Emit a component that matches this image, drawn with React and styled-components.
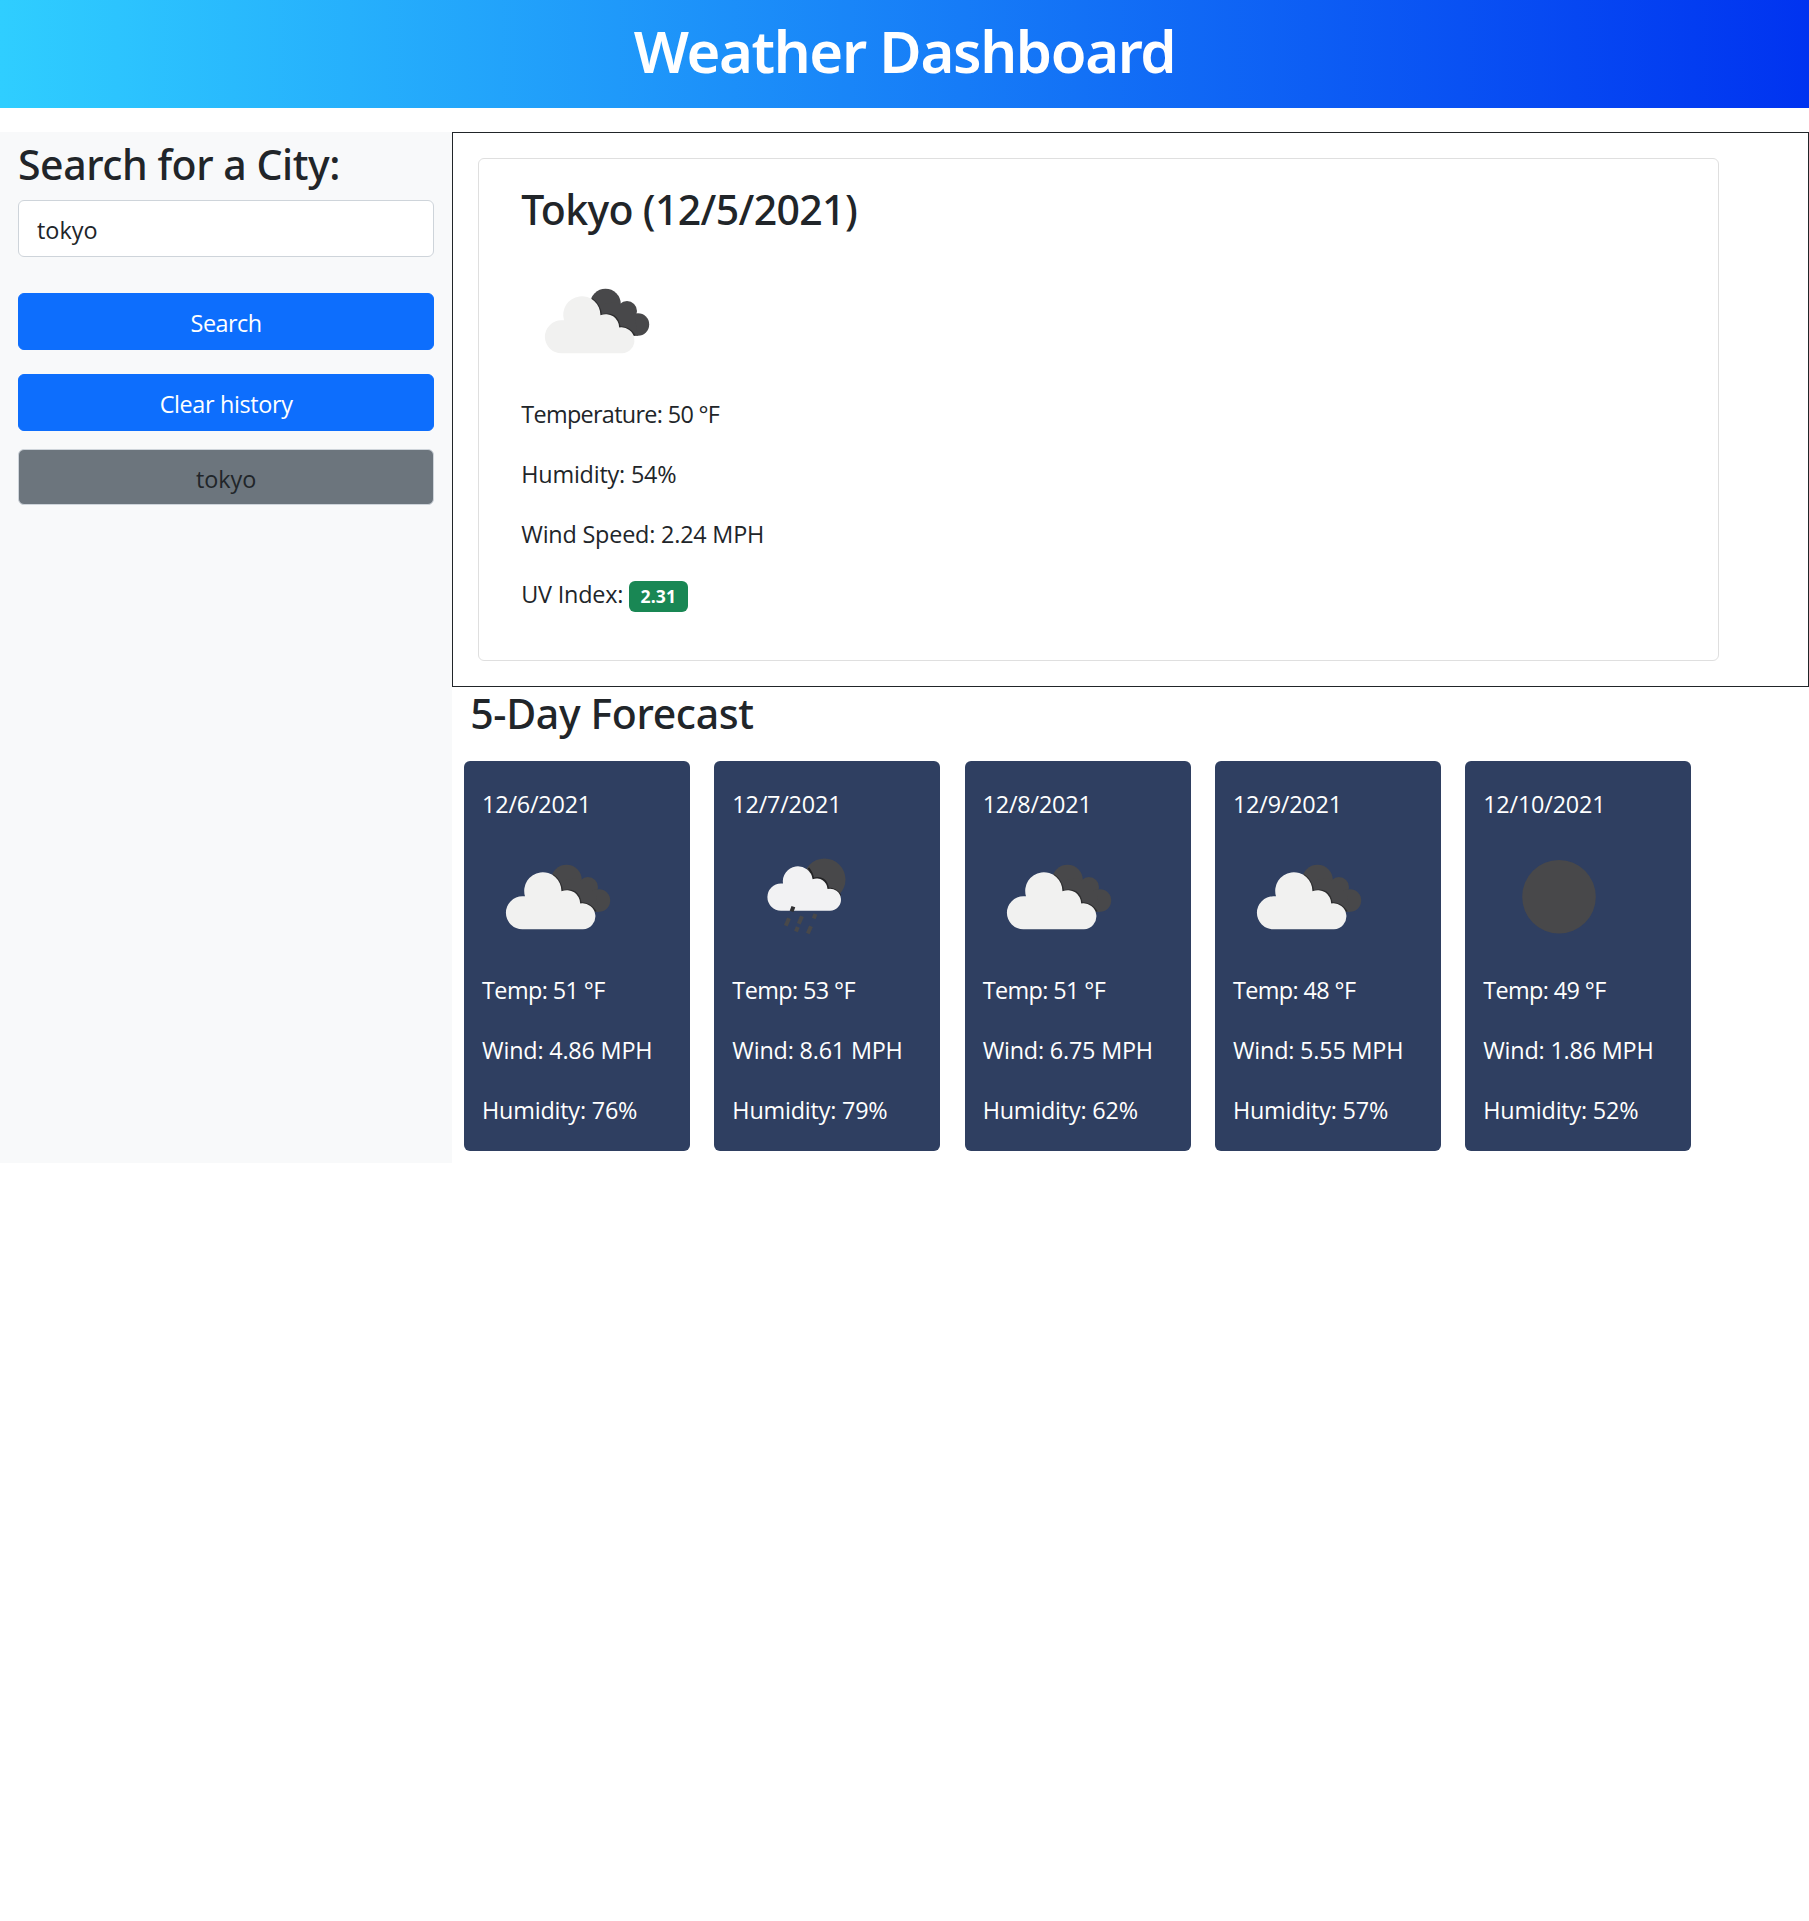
import React from "react";
import styled, { createGlobalStyle } from "styled-components";

const Global = createGlobalStyle`
  *, *::before, *::after { box-sizing: border-box; }
  html { background: #fff; }
  body {
    margin: 0;
    color: #212529;
    font-family: "Segoe UI", "Open Sans", "Noto Sans", sans-serif;
    font-size: 23.4px;
    line-height: 36px;
  }
`;

const Header = styled.header`
  height: 108px;
  padding-top: 17px;
  background: linear-gradient(90deg, #2fceff 0%, #0033f0 100%);
  color: #fff;
  text-align: center;
`;

const PageTitle = styled.h1`
  margin: 0;
  font-family: "Segoe UI", "Noto Sans", sans-serif;
  font-size: 58px;
  font-weight: 600;
  line-height: 68px;
  letter-spacing: -1.38px;
`;

const Heading = styled.h2`
  margin: 0;
  padding-top: 3px;
  font-family: "Segoe UI", "Noto Sans", sans-serif;
  font-size: 41px;
  font-weight: 500;
  line-height: 47.4px;
  letter-spacing: ${(p) => p.$spacing || 0}px;
`;

const Layout = styled.div`
  display: grid;
  grid-template-columns: 25% 75%;
  margin-top: 24px;
`;

const Sidebar = styled.aside`
  display: flex;
  flex-direction: column;
  padding: 6px 18px 0;
  background: #f8f9fa;
`;

const CityInput = styled.input`
  width: 100%;
  height: 56.5px;
  margin: 12px 0 36px;
  padding: 2px 18px 0;
  border: 1px solid #ced4da;
  border-radius: 6px;
  background: #fff;
  color: #212529;
  font: inherit;
  outline: none;
`;

const Button = styled.button`
  height: 56.8px;
  margin-bottom: ${(p) => p.$gap || 0}px;
  padding: 4px 18px 0;
  border: 1px solid ${(p) => (p.$muted ? "#ced4da" : "#0d6efd")};
  border-radius: 6px;
  background: ${(p) => (p.$muted ? "#6c757d" : "#0d6efd")};
  color: ${(p) => (p.$muted ? "#212529" : "#fff")};
  font: inherit;
  letter-spacing: ${(p) => p.$spacing || 0}px;
`;

const Current = styled.section`
  height: 555px;
  padding: 25px 89px 25px 25px;
  border: 1px solid #212529;
`;

const CurrentCard = styled.article`
  height: 503px;
  padding: 24px 42px;
  border: 1px solid #dfdfdf;
  border-radius: 6px;
`;

const Line = styled.p`
  margin: 0 0 ${(p) => (p.$tight ? 0 : 24)}px;
  padding-top: 2px;
  line-height: 34px;
  letter-spacing: ${(p) => p.$spacing ?? -0.2}px;
  white-space: nowrap;
`;

const Badge = styled.span`
  display: inline-block;
  height: 31px;
  padding: 0 11.4px;
  border-radius: 6px;
  background: #198754;
  color: #fff;
  font-size: 17.6px;
  font-weight: 700;
  line-height: 31px;
  letter-spacing: 0.1px;
`;

const Forecast = styled.section`
  padding: 0 18px;
`;

const Days = styled.div`
  display: flex;
  gap: 24.2px;
  margin: 24px 0 12px -6.2px;
`;

const DayCard = styled.article`
  flex: 0 0 226.1px;
  height: 390px;
  padding: 24px 18px;
  border-radius: 6px;
  background: #2f3f61;
  color: #fff;
`;

const Icon = styled.svg`
  display: block;
  width: 150px;
  height: 150px;
  margin-top: ${(p) => p.$top || 0}px;
`;

function Clouds() {
  return (
    <>
      <g fill="#48484a">
        <circle cx="84.5" cy="59" r="15.3" />
        <circle cx="106" cy="66" r="10" />
        <circle cx="117" cy="79.5" r="11.2" />
        <path d="M78 60L96 57L114 73L117 90.7H110L84 76z" />
      </g>
      <g fill="none" stroke="#242426" strokeOpacity=".75" strokeWidth="1.6">
        <path d="M71 54Q79 60 80.3 70Q96 66 98.8 81.8Q108 82 114 90.5" />
      </g>
      <path fill="#f1f1f0" d="M40.4 108.3A16.5 16.5 0 0 1 40.4 75.3H43A18.6 18.6 0 1 1 79.4 70.3A13.4 13.4 0 0 1 98.2 82.5A13 13 0 1 1 101 108.3z" />
    </>
  );
}

function RainNight() {
  return (
    <>
      <circle cx="92.5" cy="58.5" r="21" fill="#48484a" />
      <path d="M76.5 47Q80.5 52 81.2 57.6Q94 54.5 96.2 67.4Q104.5 67.5 108.5 74.5" fill="none" stroke="#242426" strokeWidth="1.8" />
      <path fill="#f2f2f3" d="M49 89.7A13.6 13.6 0 0 1 49 62.5H51A14.8 14.8 0 1 1 80.6 58.2A11 11 0 0 1 95.5 68A11 11 0 1 1 97.5 89.7z" />
      <g stroke="#48484a" strokeWidth="4" strokeLinecap="butt">
        <path d="M61.4 85.6L59.6 90.4" stroke="#303032" />
        <path d="M57 97.3L53.8 104.8" />
        <path d="M70 95.3L66.8 102.8" />
        <path d="M83.5 93L81.7 97.5" />
        <path d="M65.8 106L64 110.5" />
        <path d="M79 105.3L75.8 112.5" />
      </g>
    </>
  );
}

function WeatherIcon({ kind, top }) {
  return (
    <Icon viewBox="0 0 150 150" $top={top} aria-hidden="true">
      {kind === "clouds" && <Clouds />}
      {kind === "rain" && <RainNight />}
      {kind === "clear" && <circle cx="76" cy="75.8" r="36.8" fill="#48484a" />}
    </Icon>
  );
}

const days = [
  { date: "12/6/2021", icon: "clouds", temp: 51, wind: "4.86", humidity: 76 },
  { date: "12/7/2021", icon: "rain", temp: 53, wind: "8.61", humidity: 79 },
  { date: "12/8/2021", icon: "clouds", temp: 51, wind: "6.75", humidity: 62 },
  { date: "12/9/2021", icon: "clouds", temp: 48, wind: "5.55", humidity: 57 },
  { date: "12/10/2021", icon: "clear", temp: 49, wind: "1.86", humidity: 52 },
];

export default function App() {
  return (
    <>
      <Global />
      <Header>
        <PageTitle>Weather Dashboard</PageTitle>
      </Header>
      <Layout>
        <Sidebar>
          <Heading $spacing={-0.45}>Search for a City:</Heading>
          <CityInput type="text" defaultValue="tokyo" aria-label="City" />
          <Button $gap={24} $spacing={-0.5}>Search</Button>
          <Button $gap={18} $spacing={-0.35}>Clear history</Button>
          <Button $muted>tokyo</Button>
        </Sidebar>
        <main>
          <Current>
            <CurrentCard>
              <Heading $spacing={-0.65}>Tokyo (12/5/2021)</Heading>
              <WeatherIcon kind="clouds" top={12} />
              <Line $spacing={-0.68}>Temperature: 50 °F</Line>
              <Line>Humidity: 54%</Line>
              <Line>Wind Speed: 2.24 MPH</Line>
              <Line>
                UV Index: <Badge>2.31</Badge>
              </Line>
            </CurrentCard>
          </Current>
          <Forecast>
            <Heading $spacing={-0.35}>5-Day Forecast</Heading>
            <Days>
              {days.map((d) => (
                <DayCard key={d.date}>
                  <Line $tight $spacing={-0.2}>{d.date}</Line>
                  <WeatherIcon kind={d.icon} />
                  <Line $spacing={-0.6}>Temp: {d.temp} °F</Line>
                  <Line>Wind: {d.wind} MPH</Line>
                  <Line>Humidity: {d.humidity}%</Line>
                </DayCard>
              ))}
            </Days>
          </Forecast>
        </main>
      </Layout>
    </>
  );
}
